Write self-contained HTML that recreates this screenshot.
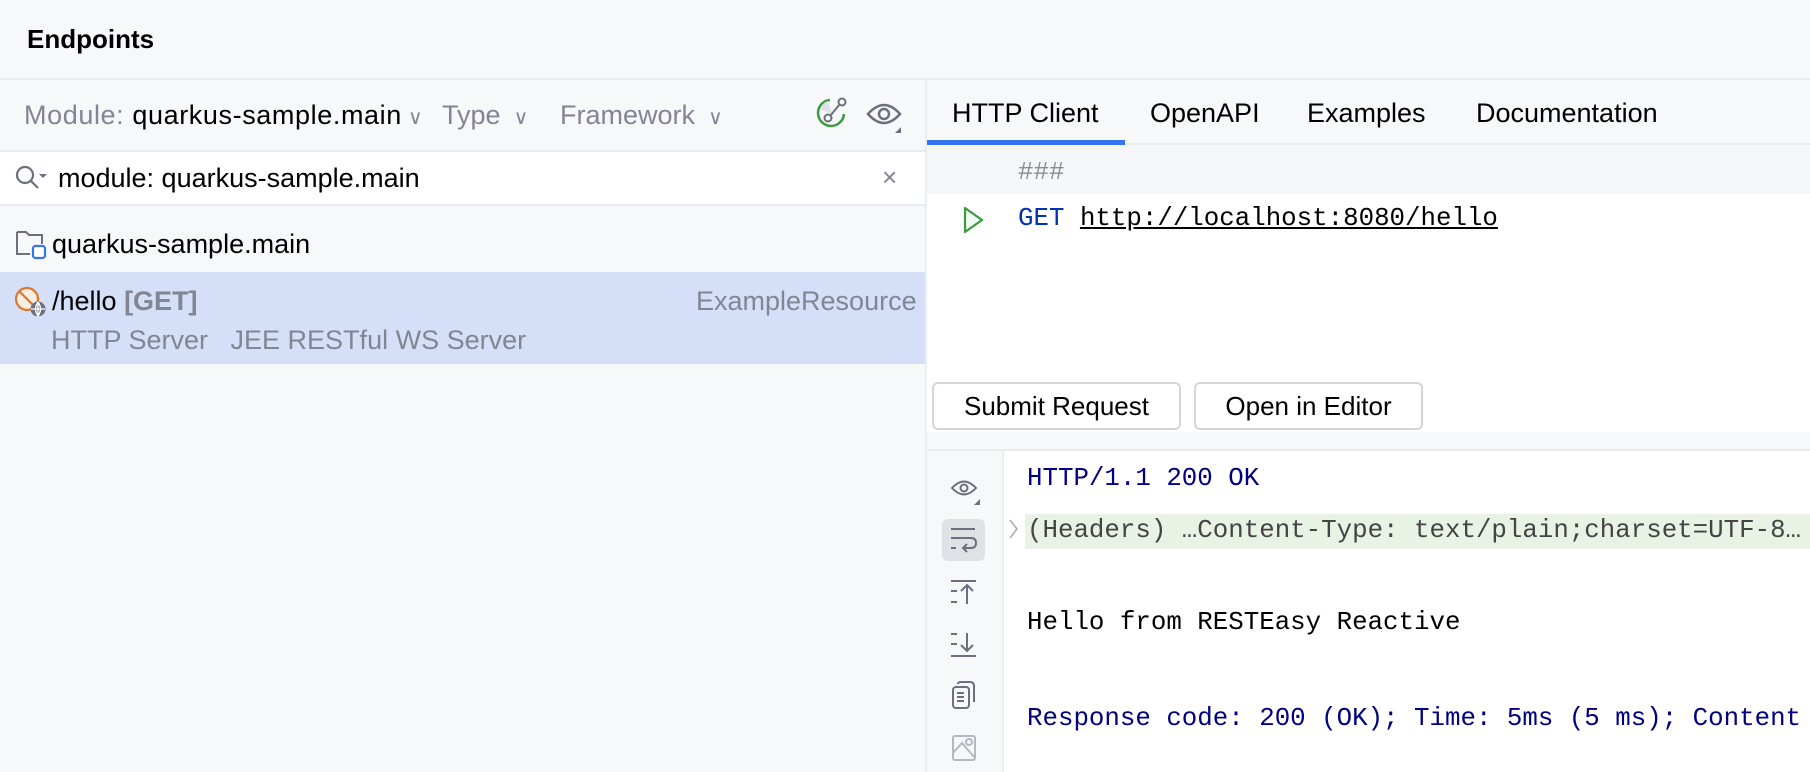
<!DOCTYPE html>
<html><head><meta charset="utf-8"><style>
*{margin:0;padding:0;box-sizing:border-box}
body{width:1810px;height:772px;overflow:hidden;background:#f7f8fa;font-family:"Liberation Sans",sans-serif;color:#000;position:relative}
.a{position:absolute;white-space:nowrap}
.ui{font-size:27px}
.mono{font-family:"Liberation Mono",monospace;font-size:25.8px}
.g{color:#818594}
</style></head><body>
<div class="a ui" style="left:27px;top:24px;font-weight:bold;font-size:26px">Endpoints</div>
<div class="a" style="left:0;top:78px;width:1810px;height:2px;background:#ebecf0"></div>
<div class="a" style="left:0;top:80px;width:925px;height:692px;background:#f7f8fa"></div>
<div class="a ui" style="left:24px;top:100px;letter-spacing:0.6px"><span class="g">Module: </span>quarkus-sample.main<span class="g" style="font-size:20px"> ∨</span></div>
<div class="a ui g" style="left:442px;top:100px">Type <span style="font-size:20px">&nbsp;∨</span></div>
<div class="a ui g" style="left:560px;top:100px">Framework <span style="font-size:20px">&nbsp;∨</span></div>
<svg class="a" style="left:814px;top:96px" width="36" height="36" viewBox="0 0 36 36"><path d="M16 4 A13 13 0 1 0 30 18" fill="none" stroke="#3a9a3f" stroke-width="2.5"/><path d="M6 13 A13 13 0 0 1 14 5 L18 18Z" fill="#dfe1e5"/><circle cx="14" cy="22" r="3.5" fill="none" stroke="#6c707e" stroke-width="2"/><circle cx="28" cy="6" r="3.5" fill="none" stroke="#6c707e" stroke-width="2"/><path d="M16.5 19.5 L25.5 8.5" stroke="#6c707e" stroke-width="2"/></svg>
<svg class="a" style="left:866px;top:98px" width="38" height="36" viewBox="0 0 38 36"><path d="M2 16 Q18 -2 34 16 Q18 34 2 16Z" fill="none" stroke="#6c707e" stroke-width="2.5"/><circle cx="18" cy="16" r="5" fill="none" stroke="#6c707e" stroke-width="2.5"/><path d="M35 29 L35 35 L29 35Z" fill="#6c707e"/></svg>
<div class="a" style="left:0;top:150px;width:925px;height:2px;background:#ebecf0"></div>
<div class="a" style="left:0;top:152px;width:925px;height:52px;background:#fff"></div>
<svg class="a" style="left:14px;top:164px" width="36" height="30" viewBox="0 0 36 30"><circle cx="11" cy="11" r="8" fill="none" stroke="#6c707e" stroke-width="2.2"/><path d="M17 17 L24 24" stroke="#6c707e" stroke-width="2.2"/><path d="M25 10 L33 10 L29 14Z" fill="#6c707e"/></svg>
<div class="a ui" style="left:58px;top:163px">module: quarkus-sample.main</div>
<div class="a g" style="left:882px;top:162px;font-size:26px">×</div>
<div class="a" style="left:0;top:204px;width:925px;height:2px;background:#ebecf0"></div>
<svg class="a" style="left:15px;top:228px" width="34" height="32" viewBox="0 0 34 32"><path d="M2 4 L11 4 L14 7 L27 7 L27 16 M2 4 L2 26 L15 26" fill="none" stroke="#6c707e" stroke-width="2"/><rect x="18" y="18" width="12" height="12" rx="2.5" fill="#fff" stroke="#3574f0" stroke-width="2.2"/></svg>
<div class="a ui" style="left:52px;top:229px">quarkus-sample.main</div>
<div class="a" style="left:0;top:272px;width:925px;height:92px;background:#d5e0f8"></div>
<svg class="a" style="left:14px;top:286px" width="36" height="34" viewBox="0 0 36 34"><circle cx="13" cy="13" r="11" fill="#fdeee3" stroke="#e0752d" stroke-width="2.2"/><path d="M5 5 L21 21" stroke="#e0752d" stroke-width="2.2"/><circle cx="24" cy="23" r="7.5" fill="#6c707e"/><path d="M17 23 L31 23 M24 16 L24 30 M24 16 Q19 23 24 30 Q29 23 24 16" fill="none" stroke="#fff" stroke-width="1.3"/></svg>
<div class="a ui" style="left:52px;top:286px">/hello <b class="g">[GET]</b></div>
<div class="a ui g" style="left:696px;top:286px">ExampleResource</div>
<div class="a ui g" style="left:51px;top:325px">HTTP Server &nbsp; JEE RESTful WS Server</div>
<div class="a" style="left:925px;top:80px;width:2px;height:692px;background:#ebecf0"></div>
<div class="a ui" style="left:952px;top:98px">HTTP Client</div>
<div class="a ui" style="left:1150px;top:98px">OpenAPI</div>
<div class="a ui" style="left:1307px;top:98px">Examples</div>
<div class="a ui" style="left:1476px;top:98px">Documentation</div>
<div class="a" style="left:927px;top:143px;width:883px;height:2px;background:#ebecf0"></div>
<div class="a" style="left:927px;top:140px;width:198px;height:5px;background:#3574f0"></div>
<div class="a" style="left:927px;top:145px;width:883px;height:49px;background:#f5f6fa"></div>
<div class="a" style="left:927px;top:194px;width:883px;height:238px;background:#fff"></div>
<div class="a mono" style="left:1018px;top:158px;color:#8c8c8c">###</div>
<svg class="a" style="left:962px;top:205px" width="24" height="30" viewBox="0 0 24 30"><path d="M3 3 L20 15 L3 27Z" fill="#f2fcf3" stroke="#3a9a3f" stroke-width="2.2" stroke-linejoin="round"/></svg>
<div class="a mono" style="left:1018px;top:204px"><span style="color:#0033b3">GET</span> <span style="text-decoration:underline">http://localhost:8080/hello</span></div>
<div class="a ui" style="left:932px;top:382px;width:249px;height:48px;background:#fff;border:2px solid #d3d5db;border-radius:6px;text-align:center;line-height:44px;font-size:26px">Submit Request</div>
<div class="a ui" style="left:1194px;top:382px;width:229px;height:48px;background:#fff;border:2px solid #d3d5db;border-radius:6px;text-align:center;line-height:44px;font-size:26px">Open in Editor</div>
<div class="a" style="left:927px;top:449px;width:883px;height:2px;background:#ebecf0"></div>
<div class="a" style="left:927px;top:451px;width:77px;height:321px;background:#f7f8fa;border-right:2px solid #ebecf0"></div>
<div class="a" style="left:1004px;top:451px;width:806px;height:321px;background:#fff"></div>
<svg class="a" style="left:949px;top:475px" width="38" height="34" viewBox="0 0 38 34"><path d="M3 13 Q15 0 27 13 Q15 26 3 13Z" fill="none" stroke="#6c707e" stroke-width="2"/><circle cx="15" cy="13" r="3.5" fill="none" stroke="#6c707e" stroke-width="2"/><path d="M31 24 L31 30 L25 30Z" fill="#6c707e"/></svg>
<div class="a" style="left:942px;top:519px;width:43px;height:42px;background:#dfe1e5;border-radius:6px"></div>
<svg class="a" style="left:948px;top:524px" width="32" height="34" viewBox="0 0 32 34"><path d="M3 5 L27 5 M3 14 L23 14 Q28 14 28 19 Q28 24 23 24 L16 24 M19 20 L15 24 L19 28 M3 24 L8 24" fill="none" stroke="#6c707e" stroke-width="2"/></svg>
<svg class="a" style="left:948px;top:578px" width="32" height="30" viewBox="0 0 32 30"><path d="M3 3 L28 3 M3 13 L9 13 M3 24 L9 24 M19 26 L19 7 M13 13 L19 7 L25 13" fill="none" stroke="#6c707e" stroke-width="2"/></svg>
<svg class="a" style="left:948px;top:630px" width="32" height="30" viewBox="0 0 32 30"><path d="M3 4 L9 4 M3 14 L9 14 M3 26 L28 26 M19 3 L19 21 M13 15 L19 21 L25 15" fill="none" stroke="#6c707e" stroke-width="2"/></svg>
<svg class="a" style="left:950px;top:680px" width="30" height="32" viewBox="0 0 30 32"><rect x="3" y="7" width="16" height="21" rx="3" fill="none" stroke="#6c707e" stroke-width="2"/><path d="M8 4 Q8 2 11 2 L20 2 Q24 2 24 6 L24 22" fill="none" stroke="#6c707e" stroke-width="2"/><path d="M7 13 L14 13 M7 17 L14 17 M7 21 L14 21" stroke="#6c707e" stroke-width="2"/></svg>
<svg class="a" style="left:950px;top:733px" width="30" height="30" viewBox="0 0 30 30"><rect x="3" y="3" width="22" height="24" rx="2" fill="none" stroke="#b4b8bf" stroke-width="2"/><path d="M3 20 L12 10 L25 25" fill="none" stroke="#b4b8bf" stroke-width="2"/><circle cx="19" cy="9" r="3" fill="none" stroke="#b4b8bf" stroke-width="2"/></svg>
<div class="a mono" style="left:1027px;top:464px;color:#000080">HTTP/1.1 200 OK</div>
<svg class="a" style="left:1008px;top:517px" width="12" height="24" viewBox="0 0 12 24"><path d="M2 3 L9 12 L2 21" fill="none" stroke="#a8adbd" stroke-width="1.6"/></svg>
<div class="a" style="left:1025px;top:514px;width:785px;height:35px;background:#e8f3e6"></div>
<div class="a mono" style="left:1027px;top:516px;color:#444">(Headers) …Content-Type: text/plain;charset=UTF-8…</div>
<div class="a mono" style="left:1027px;top:608px">Hello from RESTEasy Reactive</div>
<div class="a mono" style="left:1027px;top:704px;color:#000080">Response code: 200 (OK); Time: 5ms (5 ms); Content</div>
</body></html>
